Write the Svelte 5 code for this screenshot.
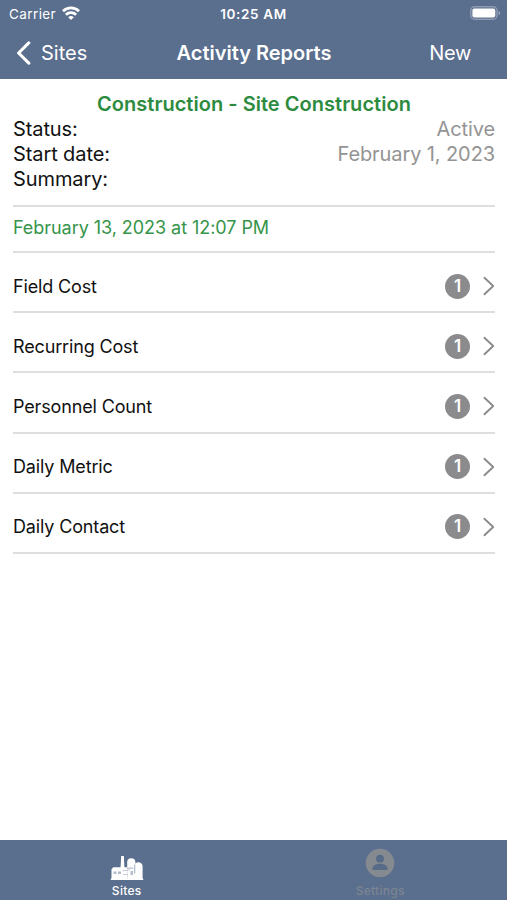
<script lang="ts">
	type ReportRow = { label: string; count: number };

	const site = {
		name: 'Construction - Site Construction',
		status: 'Active',
		startDate: 'February 1, 2023',
		summary: ''
	};

	const rows: ReportRow[] = [
		{ label: 'Field Cost', count: 1 },
		{ label: 'Recurring Cost', count: 1 },
		{ label: 'Personnel Count', count: 1 },
		{ label: 'Daily Metric', count: 1 },
		{ label: 'Daily Contact', count: 1 }
	];
</script>

<div class="screen">
	<header>
		<div class="status-bar">
			<div class="carrier">
				<span>Carrier</span>
				<svg class="wifi" width="18" height="14" viewBox="0 0 18 14">
					<g fill="none" stroke="#fff" stroke-width="2.7">
						<path d="M1 5.2a11.4 11.4 0 0 1 16 0" />
						<path d="M3.9 8.7a7.3 7.3 0 0 1 10.2 0" />
					</g>
					<path d="M9 13.900l-2.800-2.700a4.100 4.100 0 0 1 5.600 0z" fill="#fff" />
				</svg>
			</div>
			<span class="time">10:25 AM</span>
			<svg class="battery" width="31" height="14" viewBox="0 0 31 14">
				<rect x="0.8" y="0.8" width="26.2" height="12.4" rx="3.8" fill="none" stroke="#8c9ab2" stroke-width="1.5" />
				<rect x="2.4" y="2.4" width="22.900" height="9.200" rx="2" fill="#fff" />
				<path d="M28.600 4.800c2 .8 2 3.600 0 4.400z" fill="#a5afc2" />
			</svg>
		</div>
		<nav>
			<button class="back">
				<svg width="15" height="24" viewBox="0 0 15 24">
					<path d="M12.8 1.800L2.600 12l10.200 10.200" fill="none" stroke="#fff" stroke-width="3.1" stroke-linecap="round" stroke-linejoin="round" />
				</svg>
				<span>Sites</span>
			</button>
			<h1>Activity Reports</h1>
			<button class="new"><span>New</span></button>
		</nav>
	</header>

	<main>
		<h2>{site.name}</h2>
		<dl>
			<dt>Status:</dt>
			<dd>{site.status}</dd>
			<dt>Start date:</dt>
			<dd>{site.startDate}</dd>
			<dt>Summary:</dt>
			<dd>{site.summary}</dd>
		</dl>
		<div class="report-date">February 13, 2023 at 12:07 PM</div>
		<ul>
			{#each rows as row (row.label)}
				<li>
					<span class="label">{row.label}</span>
					<span class="count">{row.count}</span>
					<svg width="12" height="20" viewBox="0 0 12 20">
						<path d="M1.4 1.8L10.2 10l-8.8 8.2" fill="none" stroke="#8b8b8e" stroke-width="1.9" stroke-linecap="round" stroke-linejoin="round" />
					</svg>
				</li>
			{/each}
		</ul>
	</main>

	<footer>
		<button class="tab active">
			<svg width="34" height="26" viewBox="0 0 34 26">
				<g fill="#fff">
					<path d="M11.2 1h2.600l.7 12h-4z" />
					<path d="M1.500 14.500l1.700-2.300h14v12.300H1.500z" />
					<path d="M17.200 13.500V7.300a4.100 4.100 0 0 1 8.200 0v17.200h-8.200z" />
					<path d="M24.200 24.500V11.400a4.200 4.200 0 0 1 8.400 0v13.100z" />
					<path d="M.8 23.600h32.400v1.500H.8z" />
				</g>
				<g fill="#b4bdcc">
					<path d="M3.500 16.500h3v2.500h-3zM8 16.500h3v2.500H8z" />
					<path d="M12.500 15.500l7.500-1v.8l-7.500 1zM13 19h5v.8h-5zM20.500 16h2.500v4h-2.500z" />
				</g>
				<path d="M24.400 9.500h.8v9h-.8zM17.200 12.800h6v.7h-6z" fill="#8795ae" />
			</svg>
			<span>Sites</span>
		</button>
		<button class="tab settings">
			<svg width="30" height="30" viewBox="0 0 30 30">
				<circle cx="15" cy="15" r="14.3" fill="#858a91" />
				<circle cx="15" cy="10.7" r="3.9" fill="#576a88" />
				<path d="M7.500 22v-1.500c0-3 4-4.700 7.500-4.700s7.500 1.700 7.500 4.700V22z" fill="#576a88" />
			</svg>
			<span>Settings</span>
		</button>
	</footer>
</div>

<style>
	:global(body) {
		background: #fff;
	}
	.screen {
		display: flex;
		flex-direction: column;
		width: 507px;
		height: 900px;
		overflow: hidden;
		font-family: Inter, 'Liberation Sans', sans-serif;
		color: #111;
		background: #fff;
	}
	header {
		height: 79px;
		background: #5a6e8d;
		color: #fff;
		box-sizing: border-box;
	}
	.status-bar {
		display: grid;
		grid-template-columns: 1fr auto 1fr;
		align-items: center;
		height: 27px;
		padding: 0 6px 0 9px;
		font-size: 13.5px;
	}
	.carrier {
		display: flex;
		align-items: center;
		gap: 6px;
		letter-spacing: 0.4px;
	}
	.wifi {
		margin-top: -2px;
	}
	.time {
		margin-left: -3px;
		font-weight: 600;
		letter-spacing: 0.65px;
	}
	.battery {
		justify-self: end;
		margin-top: -1px;
	}
	nav {
		display: grid;
		grid-template-columns: 1fr auto 1fr;
		align-items: center;
		height: 51px;
		padding: 0 36px 0 16px;
	}
	button {
		border: 0;
		padding: 0;
		margin: 0;
		background: none;
		color: inherit;
		font: inherit;
	}
	.back,
	.new {
		display: flex;
		align-items: center;
		font-size: 20px;
	}
	.back {
		gap: 10px;
	}
	.new {
		justify-self: end;
		letter-spacing: -0.3px;
	}
	h1,
	h2 {
		margin: 0;
		font-size: 20px;
		font-weight: 600;
	}
	h1 {
		margin-left: 21px;
	}
	main {
		flex: 1;
		padding: 13px 12px 0 13px;
	}
	h2 {
		line-height: 25px;
		text-align: center;
		letter-spacing: 0.03px;
		color: #2d8b40;
	}
	dl {
		display: grid;
		grid-template-columns: auto 1fr;
		grid-auto-rows: 25px;
		margin: 0;
		height: 88px;
		font-size: 20px;
		line-height: 25px;
		letter-spacing: -0.1px;
		border-bottom: 2px solid #dedede;
	}
	dd {
		margin: 0;
		text-align: right;
		color: #949494;
	}
	.report-date {
		height: 44px;
		line-height: 41px;
		font-size: 18px;
		letter-spacing: -0.05px;
		color: #35944a;
		border-bottom: 2px solid #dedede;
	}
	ul {
		list-style: none;
		margin: 0;
		padding: 0;
	}
	li {
		display: flex;
		align-items: center;
		height: 60.2px;
		box-sizing: border-box;
		padding-top: 8px;
		font-size: 18px;
		letter-spacing: -0.15px;
		border-bottom: 2px solid #dedede;
	}
	.label {
		flex: 1;
	}
	.count {
		width: 25px;
		height: 25px;
		margin-right: 13px;
		border-radius: 50%;
		background: #8b8b8e;
		color: #fff;
		font-size: 17px;
		font-weight: 600;
		line-height: 25px;
		text-align: center;
	}
	footer {
		display: flex;
		height: 60px;
		background: #5a6e8d;
		color: #fff;
	}
	.tab {
		flex: 1;
		display: flex;
		flex-direction: column;
		align-items: center;
		justify-content: flex-end;
		gap: 2px;
		padding-bottom: 1px;
		font-size: 12px;
		font-weight: 500;
		letter-spacing: 0.3px;
		line-height: 16px;
		color: #7c8591;
	}
	.tab.active {
		color: #fff;
	}
	.tab.settings {
		gap: 5px;
	}
</style>
